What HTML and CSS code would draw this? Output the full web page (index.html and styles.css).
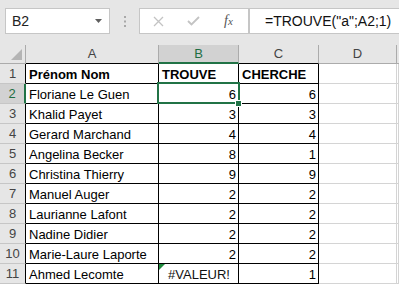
FILE: index.html
```html
<!DOCTYPE html>
<html>
<head>
<meta charset="utf-8">
<link rel="stylesheet" href="styles.css">
</head>
<body>
<div class="app">
  <div class="fbar">
    <div class="namebox">
      <span class="nbtext">B2</span>
      <svg class="arrow" width="7" height="4" viewBox="0 0 7 4"><path d="M0 0H7L3.5 4Z" fill="#5f5f5f"/></svg>
    </div>
    <div class="sep">
      <svg width="2" height="11" viewBox="0 0 2 11"><rect x="0" y="0" width="2" height="2" fill="#a8a8a8"/><rect x="0" y="4.5" width="2" height="2" fill="#a8a8a8"/><rect x="0" y="9" width="2" height="2" fill="#a8a8a8"/></svg>
    </div>
    <div class="btns">
      <svg class="ico-x" width="11" height="11" viewBox="0 0 11 11"><path d="M1 1L10 10M10 1L1 10" stroke="#c3c3c3" stroke-width="1.3" fill="none"/></svg>
      <svg class="ico-ok" width="13" height="10" viewBox="0 0 13 10"><path d="M1 5L4.5 8.5L12 1" stroke="#c3c3c3" stroke-width="1.8" fill="none"/></svg>
      <span class="fx">f<span class="fxx">x</span></span>
    </div>
    <div class="formula">=TROUVE("a";A2;1)</div>
  </div>
  <div class="sheet">
    <div class="corner"><span class="tri"></span></div>
    <div class="ch dk">A</div>
    <div class="ch sel">B</div>
    <div class="ch dk">C</div>
    <div class="ch">D</div>
    <div class="ch last"></div>

    <div class="rh">1</div><div class="c b">Prénom Nom</div><div class="c b">TROUVE</div><div class="c b">CHERCHE</div><div class="g"></div><div class="g"></div>
    <div class="rh rsel">2</div><div class="c">Floriane Le Guen</div><div class="c num active"><span>6</span><span class="selbox"></span><span class="handle"></span></div><div class="c num">6</div><div class="g"></div><div class="g"></div>
    <div class="rh">3</div><div class="c">Khalid Payet</div><div class="c num">3</div><div class="c num">3</div><div class="g"></div><div class="g"></div>
    <div class="rh">4</div><div class="c">Gerard Marchand</div><div class="c num">4</div><div class="c num">4</div><div class="g"></div><div class="g"></div>
    <div class="rh">5</div><div class="c">Angelina Becker</div><div class="c num">8</div><div class="c num">1</div><div class="g"></div><div class="g"></div>
    <div class="rh">6</div><div class="c">Christina Thierry</div><div class="c num">9</div><div class="c num">9</div><div class="g"></div><div class="g"></div>
    <div class="rh">7</div><div class="c">Manuel Auger</div><div class="c num">2</div><div class="c num">2</div><div class="g"></div><div class="g"></div>
    <div class="rh">8</div><div class="c">Laurianne Lafont</div><div class="c num">2</div><div class="c num">2</div><div class="g"></div><div class="g"></div>
    <div class="rh">9</div><div class="c">Nadine Didier</div><div class="c num">2</div><div class="c num">2</div><div class="g"></div><div class="g"></div>
    <div class="rh">10</div><div class="c">Marie-Laure Laporte</div><div class="c num">2</div><div class="c num">2</div><div class="g"></div><div class="g"></div>
    <div class="rh">11</div><div class="c">Ahmed Lecomte</div><div class="c err"><span class="etri"></span>#VALEUR!</div><div class="c num">1</div><div class="g"></div><div class="g"></div>
  </div>
</div>
</body>
</html>
```
FILE: styles.css
```css
* { box-sizing: border-box; }
html, body { margin: 0; padding: 0; }
body {
  width: 399px;
  height: 284px;
  overflow: hidden;
  background: #e6e6e6;
  font-family: "Liberation Sans", Arial, sans-serif;
  font-size: 13px;
  color: #000;
}
.app { width: 399px; }
.fbar {
  height: 45px;
  display: flex;
  align-items: flex-start;
  padding: 8px 0 0 5px;
}
.namebox {
  width: 105px;
  height: 26px;
  background: #fff;
  border: 1px solid #c6c6c6;
  display: flex;
  align-items: center;
  position: relative;
  font-size: 14px;
  color: #222;
}
.nbtext { padding-left: 6px; }
.arrow { position: absolute; left: 89px; top: 10px; }
.sep {
  width: 29px;
  height: 26px;
  display: flex;
  align-items: center;
  justify-content: center;
}
.btns {
  width: 110px;
  height: 26px;
  background: #fff;
  border: 1px solid #c6c6c6;
  display: flex;
  align-items: center;
}
.ico-x { margin-left: 13px; }
.ico-ok { margin-left: 23px; }
.fx {
  margin-left: 24px;
  font-family: "Liberation Serif", "Times New Roman", serif;
  font-style: italic;
  font-size: 14px;
  color: #555;
}
.fxx { font-size: 11px; }
.formula {
  flex: 1;
  height: 26px;
  background: #fff;
  border: 1px solid #c6c6c6;
  border-right: none;
  padding-left: 15px;
  line-height: 24px;
  font-size: 14px;
  color: #111;
  white-space: nowrap;
}
.sheet {
  display: grid;
  grid-template-columns: 26px 133px 80px 80px 78px 1fr;
  grid-template-rows: 19px repeat(11, 20px);
  background: #fff;
}
.corner {
  background: #e6e6e6;
  border-right: 1px solid #ababab;
  border-bottom: 1px solid #ababab;
  position: relative;
}
.tri {
  position: absolute;
  right: 3px;
  bottom: 3px;
  width: 0;
  height: 0;
  border-left: 11px solid transparent;
  border-bottom: 11px solid #b4b4b4;
}
.ch {
  background: #e6e6e6;
  border-right: 1px solid #ababab;
  border-bottom: 1px solid #ababab;
  text-align: center;
  line-height: 18px;
  color: #444;
}
.ch.dk { border-bottom-color: #000; }
.ch.sel {
  background: #d2d2d2;
  border-bottom: 2px solid #217346;
  color: #1f6e43;
}
.ch.last { border-right: none; }
.rh {
  background: #e6e6e6;
  border-right: 1px solid #000;
  border-bottom: 1px solid #c6c6c6;
  text-align: center;
  line-height: 20px;
  color: #444;
}
.rh.rsel {
  background: #d2d2d2;
  border-right: 2px solid #217346;
  color: #1f6e43;
}
.c {
  border-right: 1px solid #000;
  border-bottom: 1px solid #000;
  padding: 1px 2px 0 3px;
  line-height: 19px;
  white-space: nowrap;
  overflow: hidden;
  position: relative;
}
.b { font-weight: bold; }
.num { text-align: right; }
.err { text-align: center; color: #111; }
.active { overflow: visible; z-index: 2; }
.selbox {
  position: absolute;
  left: -2px;
  top: -2px;
  width: 83px;
  height: 22px;
  border: 2px solid #217346;
}
.handle {
  position: absolute;
  left: 76px;
  top: 16px;
  width: 7px;
  height: 7px;
  background: #217346;
  border: 1px solid #fff;
}
.etri {
  position: absolute;
  left: 0;
  top: 0;
  width: 0;
  height: 0;
  border-top: 6px solid #1e8a3c;
  border-right: 6px solid transparent;
}
.g {
  border-right: 1px solid #d4d4d4;
  border-bottom: 1px solid #d4d4d4;
}
```
